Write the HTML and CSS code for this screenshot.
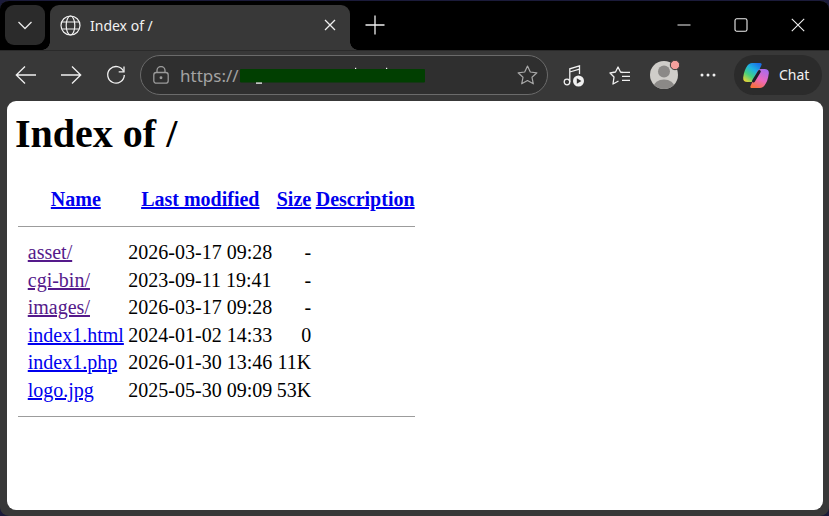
FILE: index.html
```html
<!DOCTYPE html>
<html lang="en">
<head>
<meta charset="utf-8">
<title>Index of /</title>
<link rel="stylesheet" href="styles.css">
</head>
<body>
<div class="window">
  <div class="tabstrip">
    <div class="tabmenu">
      <svg class="ico" width="16" height="16" viewBox="0 0 16 16"><path d="M1.5 5l6.5 6.5L14.500 5" fill="none" stroke="#e8e8e8" stroke-width="1.300"/></svg>
    </div>
    <div class="tab">
      <svg class="globe" width="21" height="21" viewBox="0 0 21 21" fill="none" stroke="#f0f0f0" stroke-width="1.200"><circle cx="10.500" cy="10.500" r="9.500"/><ellipse cx="10.500" cy="10.500" rx="4.300" ry="9.500"/><path d="M1.800 7h17.400M1.800 14h17.400"/></svg>
      <span class="tabtitle">Index of /</span>
      <svg class="tabclose" width="12" height="12" viewBox="0 0 12 12"><path d="M1 1l10 10M11 1L1 11" stroke="#f0f0f0" stroke-width="1.300"/></svg>
    </div>
    <div class="newtab">
      <svg width="20" height="20" viewBox="0 0 20 20"><path d="M10 .5v19M.5 10h19" stroke="#f0f0f0" stroke-width="1.300"/></svg>
    </div>
    <div class="wincontrols">
      <div class="winbtn"><svg width="14" height="14" viewBox="0 0 14 14"><path d="M.5 7h13" stroke="#f0f0f0" stroke-width="1.100"/></svg></div>
      <div class="winbtn"><svg width="14" height="14" viewBox="0 0 14 14"><rect x="1" y=".8" width="12" height="12.400" rx="1.800" fill="none" stroke="#f0f0f0" stroke-width="1.100"/></svg></div>
      <div class="winbtn"><svg width="14" height="14" viewBox="0 0 14 14"><path d="M.8.8l12.400 12.400M13.200.8L.8 13.200" stroke="#f0f0f0" stroke-width="1.100"/></svg></div>
    </div>
  </div>
  <div class="toolbar">
    <div class="navbtn"><svg width="22" height="20" viewBox="0 0 22 20" fill="none" stroke="#f0f0f0" stroke-width="1.300"><path d="M1 10h20M10 1.500L1.300 10l8.700 8.500"/></svg></div>
    <div class="navbtn"><svg width="22" height="20" viewBox="0 0 22 20" fill="none" stroke="#f0f0f0" stroke-width="1.300"><path d="M1 10h20M12 1.500l8.700 8.500-8.700 8.500"/></svg></div>
    <div class="navbtn"><svg width="20" height="20" viewBox="0 0 20 20" fill="none" stroke="#f0f0f0" stroke-width="1.300"><path d="M17.600 6.500A8.300 8.300 0 1 0 18.300 10"/><path d="M18 1.500v5.300h-5.300"/></svg></div>
    <div class="address">
      <svg class="lock" width="16" height="18" viewBox="0 0 16 18" fill="none" stroke="#9a9a9a" stroke-width="1.300"><rect x=".8" y="6.500" width="14.400" height="10.700" rx="2.500"/><path d="M4 6.500V4.500a4 4 0 0 1 8 0v2"/><circle cx="8" cy="11.800" r=".8" fill="#9a9a9a"/></svg>
      <span class="url">https://</span>
      <svg class="star" width="21" height="20" viewBox="0 0 21 20"><path d="M10.500 1l2.800 6 6.600.8-4.900 4.500 1.300 6.500-5.800-3.300-5.800 3.300 1.300-6.500L1.100 7.800l6.600-.8z" fill="none" stroke="#a8a8a8" stroke-width="1.200" stroke-linejoin="round"/></svg>
      <svg class="redact" width="190" height="20" viewBox="0 0 190 20"><rect x="2" y="3" width="185" height="13.500" rx="1" fill="#013f01"/><rect x="18" y="16.500" width="6" height="1.200" fill="#fff"/><rect x="117" y="1.800" width="1.200" height="1.200" fill="#fff"/><rect x="148" y="1.800" width="1.200" height="1.200" fill="#fff"/></svg>
    </div>
    <div class="tool music"><svg width="22" height="24" viewBox="0 0 22 24" fill="none" stroke="#f0f0f0" stroke-width="1.300"><circle cx="4" cy="19" r="2.800"/><path d="M6.800 19V5.800L16.500 2.800V11M6.800 9l9.700-2.800"/><circle cx="15.500" cy="18" r="5.500" fill="#f0f0f0" stroke="none"/><path d="M13.800 15.200l4.600 2.800-4.600 2.800z" fill="#333" stroke="none"/></svg></div>
    <div class="tool fav"><svg width="22" height="20" viewBox="0 0 22 20" fill="none" stroke="#f0f0f0" stroke-width="1.300" stroke-linejoin="round"><path d="M13.500 7.500L11.500 7 9 2 6.500 7 1 8l4 4-1 7 5.500-3"/><path d="M13 7.300h8M13 11.300h8M13 15.300h8"/></svg></div>
    <div class="tool avatarcell">
      <svg width="30" height="30" viewBox="0 0 30 30"><defs><clipPath id="c"><circle cx="14" cy="15" r="14"/></clipPath></defs><circle cx="14" cy="15" r="14" fill="#cfcdc9"/><g clip-path="url(#c)"><circle cx="14" cy="11.500" r="6" fill="#8b8987"/><ellipse cx="14" cy="27" rx="10.500" ry="7.500" fill="#8b8987"/></g><circle cx="25" cy="5" r="4.700" fill="#f4a09d" stroke="#3a3a3a" stroke-width="1"/></svg>
    </div>
    <div class="tool morecell"><svg width="16" height="4" viewBox="0 0 16 4" fill="#f0f0f0"><circle cx="2" cy="2" r="1.500"/><circle cx="8" cy="2" r="1.500"/><circle cx="14" cy="2" r="1.500"/></svg></div>
    <div class="chat">
      <svg width="28" height="27" viewBox="0 0 28 27">
        <defs>
          <linearGradient id="g1" x1="0.100" y1="1" x2="0.800" y2="0"><stop offset="0" stop-color="#f7d62f"/><stop offset=".35" stop-color="#45cf7f"/><stop offset=".65" stop-color="#1fb3e0"/><stop offset="1" stop-color="#1a6ee6"/></linearGradient>
          <linearGradient id="g2" x1="0.800" y1="0" x2="0.300" y2="1"><stop offset="0" stop-color="#a66cf0"/><stop offset=".55" stop-color="#ec68bd"/><stop offset="1" stop-color="#f6703d"/></linearGradient>
        </defs>
        <path d="M10 1h8c1.500 0 2 1 1.500 2L13 17c-.8 2-2 3-4 3H5.500C2.500 20 .8 18.500 1.200 15.500 1.800 10 3.500 6 5.500 3.500 6.700 2 8.300 1 10 1z" fill="url(#g1)"/>
        <path d="M18 26h-8c-1.500 0-2-1-1.500-2L15 10c.8-2 2-3 4-3h3.500c3 0 4.700 1.500 4.300 4.500-.6 5.500-2.300 9.500-4.300 12C21.300 25 19.700 26 18 26z" fill="url(#g2)"/>
        <path d="M17.300 9.500L11.500 19" stroke="#1d1d28" stroke-width="3" stroke-linecap="round"/>
      </svg>
      <span class="chatlabel">Chat</span>
    </div>
  </div>
  <div class="viewport">
    <h1>Index of /</h1>
    <table class="listing">
      <tr class="head"><th class="icon"></th><th><a href="#a">Name</a></th><th><a href="#b">Last modified</a></th><th><a href="#c">Size</a></th><th><a href="#d">Description</a></th></tr>
      <tr class="rule"><th colspan="5"><hr></th></tr>
      <tr><td class="icon"></td><td><a class="seen" href="#1">asset/</a></td><td>2026-03-17 09:28</td><td class="size">- </td><td></td></tr>
      <tr><td class="icon"></td><td><a class="seen" href="#2">cgi-bin/</a></td><td>2023-09-11 19:41</td><td class="size">- </td><td></td></tr>
      <tr><td class="icon"></td><td><a class="seen" href="#3">images/</a></td><td>2026-03-17 09:28</td><td class="size">- </td><td></td></tr>
      <tr><td class="icon"></td><td><a href="#4">index1.html</a></td><td>2024-01-02 14:33</td><td class="size">0 </td><td></td></tr>
      <tr><td class="icon"></td><td><a href="#5">index1.php</a></td><td>2026-01-30 13:46</td><td class="size">11K</td><td></td></tr>
      <tr><td class="icon"></td><td><a href="#6">logo.jpg</a></td><td>2025-05-30 09:09</td><td class="size">53K</td><td></td></tr>
      <tr class="rule"><th colspan="5"><hr></th></tr>
    </table>
  </div>
</div>
</body>
</html>
```
FILE: styles.css
```css
html, body {
  margin: 0;
  height: 100%;
  background: #1b1b3a;
  overflow: hidden;
}
.window {
  height: 516px;
  width: 829px;
  display: flex;
  flex-direction: column;
  border-radius: 9px;
  overflow: hidden;
  background: #383838;
  box-sizing: border-box;
  border-top: 1px solid #1b1b3a;
}
svg { display: block; }

.tabstrip {
  flex: 0 0 49px;
  display: flex;
  background: #000;
  padding-top: 4px;
  box-sizing: border-box;
}
.tabmenu {
  width: 40px;
  height: 40px;
  margin-left: 5px;
  background: #2b2b2b;
  border-radius: 9px;
  display: flex;
  align-items: center;
  justify-content: center;
}
.tab {
  width: 300px;
  height: 45px;
  margin-left: 5px;
  background: #383838;
  border-radius: 9px 9px 0 0;
  display: flex;
  align-items: center;
  position: relative;
  padding: 0 14px 5px 10px;
  box-sizing: border-box;
}
.tab::before, .tab::after {
  content: "";
  position: absolute;
  bottom: 0;
  width: 8px;
  height: 8px;
}
.tab::before { left: -8px; background: radial-gradient(circle at 0 0, #000 7.500px, #383838 8px); }
.tab::after { right: -8px; background: radial-gradient(circle at 100% 0, #000 7.500px, #383838 8px); }
.globe { flex: none; }
.tabtitle {
  font: 14px "Noto Sans", sans-serif;
  color: #f2f2f2;
  margin-left: 9px;
  flex: 1;
  margin-top: 1px;
}
.tabclose { flex: none; }
.newtab {
  width: 50px;
  height: 40px;
  display: flex;
  align-items: center;
  justify-content: center;
}
.wincontrols {
  margin-left: auto;
  display: flex;
  height: 40px;
  margin-right: 3px;
}
.winbtn {
  width: 57px;
  display: flex;
  align-items: center;
  justify-content: center;
}

.toolbar {
  flex: 0 0 50px;
  box-sizing: border-box;
  display: flex;
  align-items: center;
  padding: 0 0 1px 3px;
  background: #383838;
  border-top: 1px solid #2a2a2a;
}
.navbtn {
  width: 45px;
  display: flex;
  justify-content: center;
}
.address {
  width: 408px;
  height: 40px;
  margin-left: 2px;
  box-sizing: border-box;
  border: 1px solid #6b6b6b;
  border-radius: 20px;
  background: #2f2f2f;
  display: flex;
  align-items: center;
  padding: 0 9px 0 12px;
  position: relative;
}
.lock { flex: none; }
.url {
  font: 17px "Noto Sans", sans-serif;
  color: #a3a3a3;
  margin-left: 11px;
  flex: 1;
}
.star { flex: none; }
.redact {
  position: absolute;
  left: 97px;
  top: 10px;
}
.tool {
  display: flex;
  justify-content: center;
  align-items: center;
}
.music { width: 46px; margin-left: 3px; }
.fav { width: 46px; }
.avatarcell { width: 43px; }
.morecell { width: 44px; }
.chat {
  width: 88px;
  height: 40px;
  margin-left: 4px;
  background: #2b2b2b;
  border-radius: 20px;
  display: flex;
  align-items: center;
  padding-left: 8px;
  box-sizing: border-box;
}
.chatlabel {
  font: 14px "Noto Sans", sans-serif;
  color: #f2f2f2;
  margin-left: 9px;
  margin-bottom: 2px;
}

.viewport {
  flex: 1;
  margin: 1px 6px 6px 7px;
  background: #fff;
  border-radius: 9px;
  overflow: hidden;
  padding: 0 8px;
  font: 20px "Liberation Serif", "Times New Roman", serif;
  color: #000;
}
h1 {
  font-size: 40px;
  line-height: 45px;
  font-weight: bold;
  margin: 10px 0 0;
}
.listing {
  border-collapse: separate;
  border-spacing: 2px 3px;
  margin: 28px 0 0 -1px;
}
.listing th, .listing td {
  padding: 1.250px;
  line-height: 22px;
}
.listing td { vertical-align: top; }
.icon { width: 6px; }
a { color: #0000ee; text-decoration: underline; }
a.seen { color: #551a8b; }
.size { text-align: right; }
.listing hr {
  height: 1px;
  border: 0;
  background: #9c9c9c;
  margin: 10px 0 9px 1px;
}
```
